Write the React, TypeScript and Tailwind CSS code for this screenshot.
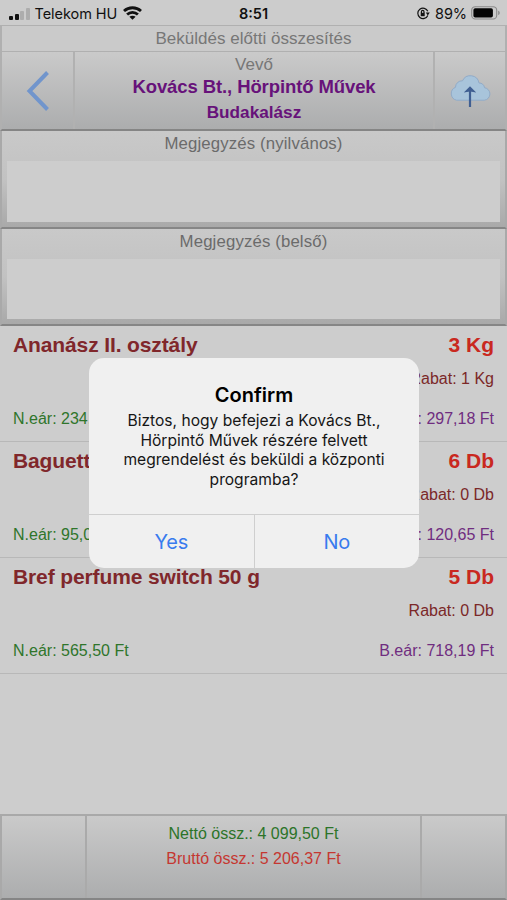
import React from "react";

type Item = { name: string; qty: string; rabat: string; net: string; gross: string };

const items: Item[] = [
  { name: "Ananász II. osztály", qty: "3 Kg", rabat: "1 Kg", net: "234,00 Ft", gross: "297,18 Ft" },
  { name: "Baguette", qty: "6 Db", rabat: "0 Db", net: "95,00 Ft", gross: "120,65 Ft" },
  { name: "Bref perfume switch 50 g", qty: "5 Db", rabat: "0 Db", net: "565,50 Ft", gross: "718,19 Ft" },
];

function StatusBar() {
  return (
    <div className="flex h-[25px] items-center bg-[#cccccc] font-['Inter',sans-serif] text-[#111]">
      <div className="flex w-[200px] items-center pl-[9px]">
        <div className="mt-[2px] flex items-end gap-[1.5px]">
          <span className="h-[4px] w-[4px] rounded-[1px] bg-[#111]" />
          <span className="h-[6px] w-[4px] rounded-[1px] bg-[#111]" />
          <span className="h-[9px] w-[4px] rounded-[1px] bg-[#adadad]" />
          <span className="h-[12px] w-[4px] rounded-[1px] bg-[#adadad]" />
        </div>
        <span className="mt-[3px] ml-[5px] text-[14.5px] leading-[20px] tracking-[-0.05px] whitespace-nowrap">Telekom HU</span>
        <svg className="mt-[1px] ml-[6px]" width="19" height="14" viewBox="0 0 19 14" fill="none" stroke="#111" strokeWidth="2.8">
          <path d="M1 5.1C5.8.6 13.2.6 18 5.1" />
          <path d="M4.1 8.5C7.2 5.6 11.8 5.6 14.9 8.5" />
          <path d="M9.5 13.7 6.4 10.8C8.1 9.3 10.9 9.3 12.6 10.8Z" fill="#111" stroke="none" />
        </svg>
      </div>
      <div className="mt-[3px] flex-1 text-center text-[14.5px] leading-[20px] font-semibold">8:51</div>
      <div className="flex w-[200px] items-center justify-end pr-[6px]">
        <svg className="mt-[2px]" width="14" height="13" viewBox="0 0 14 13" fill="none" stroke="#111" strokeWidth="1.2">
          <path d="M11.8 8.4A5.2 5.2 0 1 1 11.8 4.3" />
          <path d="M9.8 5.4h4l-2 3z" fill="#111" stroke="none" />
          <path d="M4.7 5.8h4v3.4h-4z" fill="#111" stroke="none" />
          <path d="M5.4 6V4.7a1.3 1.3 0 0 1 2.6 0V6" />
        </svg>
        <span className="mt-[3px] ml-[5px] text-[14.5px] leading-[20px] tracking-[-0.1px]">89%</span>
        <svg className="mt-[1px] ml-[4px]" width="30" height="14" viewBox="0 0 30 14">
          <rect x="0.7" y="0.7" width="25" height="12.3" rx="3.6" fill="none" stroke="#8a8a8a" strokeWidth="1.1" />
          <rect x="2.4" y="2.3" width="19.5" height="9.2" rx="1.8" fill="#050505" />
          <path d="M27.2 4.8c2 .7 2 3.6 0 4.3z" fill="#8a8a8a" />
        </svg>
      </div>
    </div>
  );
}

function Note({ label }: { label: string }) {
  return (
    <section className="flex h-[97.5px] flex-col border-x-2 border-b-2 border-x-[#a9a9a9] border-b-[#868686] bg-linear-to-b from-[#c9c9c9] via-[#c2c2c2] to-[#a9a9a9] px-[5px] pb-[5px]">
      <div className="h-[30px] pt-[2px] text-center text-[16.8px] leading-[22px] tracking-[0.13px] text-[#6b6b6b]">{label}</div>
      <div className="flex-1 bg-[#cdcdcd]" />
    </section>
  );
}

function Row({ item }: { item: Item }) {
  return (
    <li className="flex h-[116px] flex-col border-b border-[#b8b8b8] px-[13px] text-[16px]">
      <div className="flex h-[38px] justify-between pt-[7px] text-[21px] leading-[24px] font-bold">
        <span className="tracking-[-0.12px] text-[#80272b]">{item.name}</span>
        <span className="text-[#c92820]">{item.qty}</span>
      </div>
      <div className="h-[41px] pt-[4px] text-right leading-[22px] text-[#7b2828]">Rabat: {item.rabat}</div>
      <div className="flex justify-between pt-[4px] leading-[20px]">
        <span className="text-[#2f752b]">N.eár: {item.net}</span>
        <span className="text-[#702d80]">B.eár: {item.gross}</span>
      </div>
    </li>
  );
}

function ConfirmDialog() {
  return (
    <div className="absolute top-[358px] left-[89px] flex h-[210px] w-[330px] flex-col overflow-hidden rounded-[15px] bg-[#f0f0f0] font-['Inter',sans-serif]">
      <div className="h-[156px] pt-[24px] text-center">
        <h2 className="text-[20px] leading-[26px] font-semibold text-black">Confirm</h2>
        <p className="mt-[3px] text-[15.6px] leading-[19.6px] whitespace-nowrap text-[#161616]">
          Biztos, hogy befejezi a Kovács Bt.,
          <br />
          Hörpintő Művek részére felvett
          <br />
          megrendelést és beküldi a központi
          <br />
          programba?
        </p>
      </div>
      <div className="flex flex-1 border-t border-[#cfcfcf] text-[20px] tracking-[-0.2px] text-[#397bee]">
        <button className="flex-1 border-r border-[#cfcfcf]">Yes</button>
        <button className="flex-1">No</button>
      </div>
    </div>
  );
}

export default function App() {
  return (
    <div className="relative flex h-[900px] w-[507px] flex-col overflow-hidden bg-[#cdcdcd] font-['Liberation_Sans',Arial,sans-serif]">
      <StatusBar />
      <div className="h-[27px] border-2 border-t-1 border-b-1 border-[#b0b0b0] bg-[#cacaca] text-center text-[17px] leading-[26px] tracking-[0.02px] text-[#777]">
        Beküldés előtti összesítés
      </div>
      <header className="flex h-[79px] border-x-2 border-b-2 border-x-[#b0b0b0] border-b-[#858585] bg-linear-to-b from-[#cacaca] to-[#acadae]">
        <div className="flex w-[73px] items-center border-r-2 border-[#b1b1b1] pl-[24px]">
          <svg width="24" height="40" viewBox="0 0 24 40" fill="none" stroke="#7195cc" strokeWidth="4">
            <path d="M21.5 1.5 3.5 20 21.5 38.5" />
          </svg>
        </div>
        <div className="flex-1 text-center font-bold text-[#67127a]">
          <div className="pt-[2px] text-[17px] leading-[21px] font-normal text-[#777]">Vevő</div>
          <div className="text-[18.5px] leading-[24px] tracking-[-0.1px]">Kovács Bt., Hörpintő Művek</div>
          <div className="text-[17.2px] leading-[26px]">Budakalász</div>
        </div>
        <div className="flex w-[72px] items-center justify-center border-l-2 border-[#b1b1b1]">
          <svg width="44" height="34" viewBox="0 0 44 34" fill="none">
            <path
              d="M8.5 26.200A6.800 6.800 0 0 1 7.500 13.300A6.500 6.500 0 0 1 14.500 6.800A8.700 8.700 0 0 1 31 9A5.200 5.200 0 0 1 36.500 13.700A6.300 6.300 0 0 1 36.300 26.200Z"
              fill="#a8c4db"
              stroke="#91abc8"
              strokeWidth="1"
            />
            <path d="M22 33V17" stroke="#405f92" strokeWidth="2.2" />
            <path d="M22 12.200 28.200 18.600 22 17.600 15.800 18.600Z" fill="#405f92" />
          </svg>
        </div>
      </header>
      <Note label="Megjegyzés (nyilvános)" />
      <Note label="Megjegyzés (belső)" />
      <ul className="flex-1">
        {items.map((item) => (
          <Row key={item.name} item={item} />
        ))}
      </ul>
      <footer className="flex h-[86px] border-2 border-[#a9a9a9] border-b-[#858585] bg-linear-to-b from-[#cacaca] to-[#acadae] text-center text-[16px] leading-[24px]">
        <div className="w-[85px] border-r-2 border-[#aaaaaa]" />
        <div className="flex-1 pt-[6px]">
          <div className="text-[#2c7429]">Nettó össz.: 4 099,50 Ft</div>
          <div className="pt-[1px] text-[#c53731]">Bruttó össz.: 5 206,37 Ft</div>
        </div>
        <div className="w-[85px] border-l-2 border-[#aaaaaa]" />
      </footer>
      <ConfirmDialog />
    </div>
  );
}
